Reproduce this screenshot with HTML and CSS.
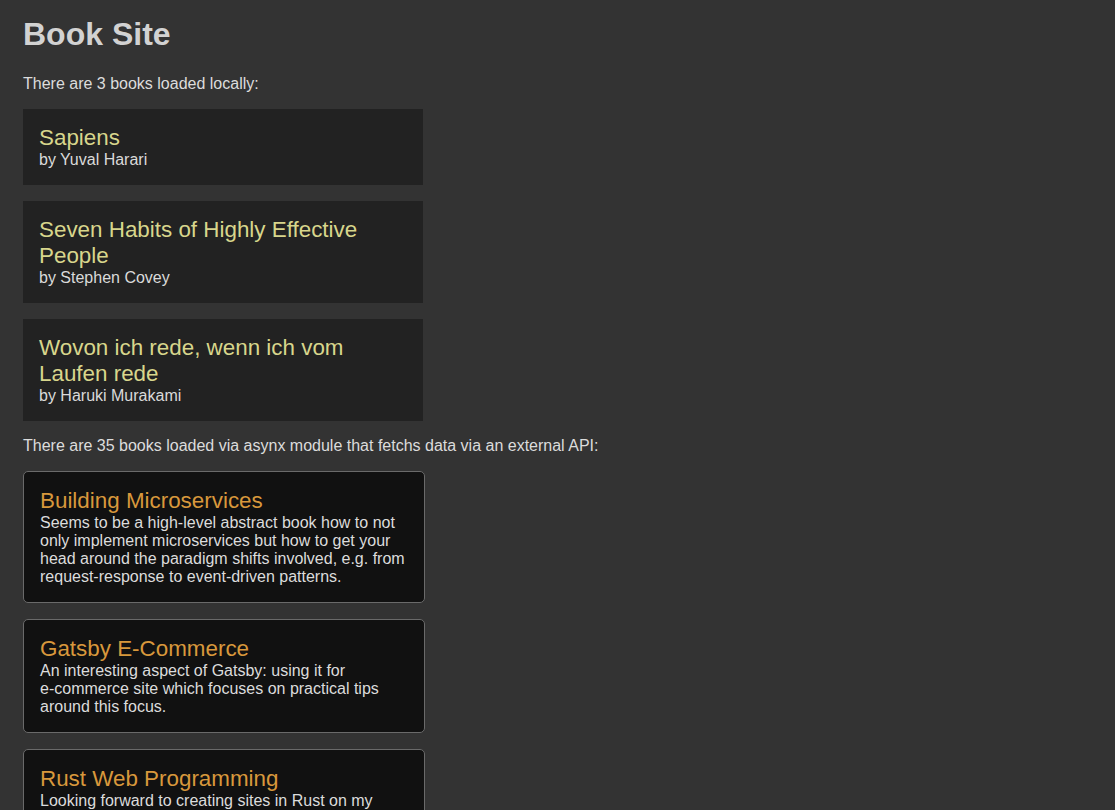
FILE: index.html
```html
<!DOCTYPE html>
<html lang="en">
<head>
<meta charset="utf-8">
<title>Book Site</title>
<link rel="stylesheet" href="styles.css">
</head>
<body>
<main class="page">
  <h1 class="site-title">Book Site</h1>
  <p class="intro">There are 3 books loaded locally:</p>
  <ul class="book-list">
    <li class="book local">
      <h2 class="book-title">Sapiens</h2>
      <div class="book-author">by Yuval Harari</div>
    </li>
    <li class="book local">
      <h2 class="book-title">Seven Habits of Highly Effective People</h2>
      <div class="book-author">by Stephen Covey</div>
    </li>
    <li class="book local">
      <h2 class="book-title">Wovon ich rede, wenn ich vom Laufen rede</h2>
      <div class="book-author">by Haruki Murakami</div>
    </li>
  </ul>
  <p class="intro">There are 35 books loaded via asynx module that fetchs data via an external API:</p>
  <ul class="book-list">
    <li class="book remote">
      <h2 class="book-title">Building Microservices</h2>
      <div class="book-desc">Seems to be a high-level abstract book how to not only implement microservices but how to get your head around the paradigm shifts involved, e.g. from request-response to event-driven patterns.</div>
    </li>
    <li class="book remote">
      <h2 class="book-title">Gatsby E-Commerce</h2>
      <div class="book-desc">An interesting aspect of Gatsby: using it for <span class="nowrap">e-commerce</span> site which focuses on practical tips around this focus.</div>
    </li>
    <li class="book remote">
      <h2 class="book-title">Rust Web Programming</h2>
      <div class="book-desc">Looking forward to creating sites in Rust on my <span class="nowrap">own machine.</span></div>
    </li>
  </ul>
</main>
</body>
</html>
```
FILE: styles.css
```css
html, body {
  margin: 0;
  padding: 0;
  background: #333333;
}
body {
  font-family: Arial, "Liberation Sans", sans-serif;
  font-size: 16px;
  color: #dddddd;
}
.page {
  padding: 16px 23px 40px;
}
.site-title {
  margin: 0 0 22px;
  font-size: 32px;
  font-weight: bold;
  line-height: normal;
  color: #d2d2d2;
}
.intro {
  margin: 0 0 16px;
  line-height: normal;
  color: #dcdcdc;
}
.book-list {
  list-style: none;
  margin: 0 0 16px;
  padding: 0;
  display: flex;
  flex-direction: column;
  gap: 16px;
}
.book {
  width: 368px;
  padding: 16px;
}
.book-title {
  margin: 0;
  font-size: 22.4px;
  font-weight: normal;
  line-height: normal;
}
.local {
  background: #222222;
}
.local .book-title {
  color: #d8d68c;
}
.book-author {
  color: #dadada;
  line-height: normal;
}
.remote {
  background: #111111;
  border: 1px solid #6a6a6a;
  border-radius: 5px;
}
.remote .book-title {
  color: #d8983c;
}
.book-desc {
  color: #dcdcdc;
  line-height: 18px;
}
.nowrap {
  white-space: nowrap;
}
```
